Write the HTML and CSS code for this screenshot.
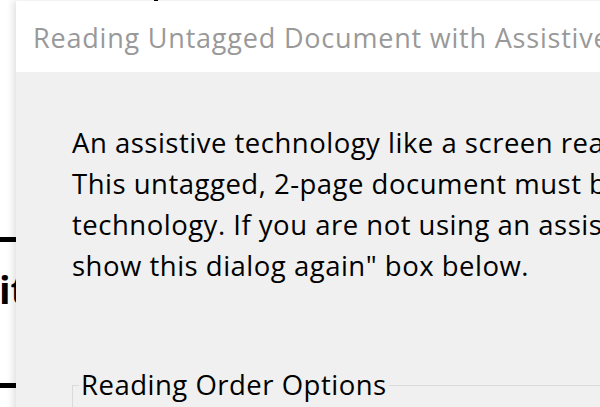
FILE: index.html
```html
<!DOCTYPE html>
<html>
<head>
<meta charset="utf-8">
<link rel="stylesheet" href="styles.css">
</head>
<body>
<div class="page">
  <div class="page-mark"></div>
  <div class="page-content">
    <div class="rule"></div>
    <div class="heading">it</div>
    <div class="rule rule-low"></div>
  </div>
</div>
<div class="dialog">
  <div class="titlebar">Reading Untagged Document with Assistive Technology</div>
  <div class="dialog-body">
    <p class="message">An assistive technology like a screen reader is being used.<br>This untagged, 2-page document must be prepared for assistive<br>technology. If you are not using an assistive technology, check the "Do not<br>show this dialog again" box below.</p>
    <fieldset class="options">
      <legend class="options-legend">Reading Order Options</legend>
      <div class="options-body"></div>
    </fieldset>
  </div>
</div>
</body>
</html>
```
FILE: styles.css
```css
html, body {
  margin: 0;
  padding: 0;
  background: #ffffff;
  overflow: hidden;
  width: 600px;
  height: 407px;
}
.page {
  position: relative;
  width: 600px;
  height: 407px;
  font-family: "Open Sans", "Noto Sans", sans-serif;
}
.page-mark {
  position: absolute;
  left: 154px;
  top: 0;
  width: 4px;
  height: 3px;
  background: #000;
}
.page-content {
  padding-top: 237px;
  display: flex;
  flex-direction: column;
}
.rule {
  width: 20px;
  height: 5px;
  background: #000;
}
.heading {
  font-weight: bold;
  font-size: 38px;
  line-height: 38px;
  height: 38px;
  margin-top: 28px;
  color: #000;
  margin-left: -1px;
}
.rule-low {
  margin-top: 75px;
}
.dialog {
  position: absolute;
  left: 16px;
  top: 1px;
  width: 700px;
  height: 460px;
  background: #f0f0f0;
  box-shadow: -3px 0 7px rgba(0, 0, 0, 0.12);
  font-family: "Open Sans", "Noto Sans", sans-serif;
  display: flex;
  flex-direction: column;
}
.titlebar {
  background: #ffffff;
  height: 71px;
  line-height: 74px;
  padding-left: 17px;
  font-size: 27px;
  letter-spacing: 0.8px;
  color: #999999;
  white-space: nowrap;
}
.dialog-body {
  padding: 50px 0 0 56px;
}
.message {
  margin: 0;
  font-size: 27.5px;
  letter-spacing: 0.5px;
  line-height: 41px;
  color: #000;
  white-space: nowrap;
}
.options {
  margin: 84px 0 0 0;
  padding: 0;
  border: 1px solid #dadada;
  border-right: none;
  height: 120px;
}
.options-legend {
  margin-left: 6px;
  padding: 0 2px;
  font-size: 27.5px;
  letter-spacing: 0.5px;
  line-height: 30px;
  color: #000;
  white-space: nowrap;
}
```
